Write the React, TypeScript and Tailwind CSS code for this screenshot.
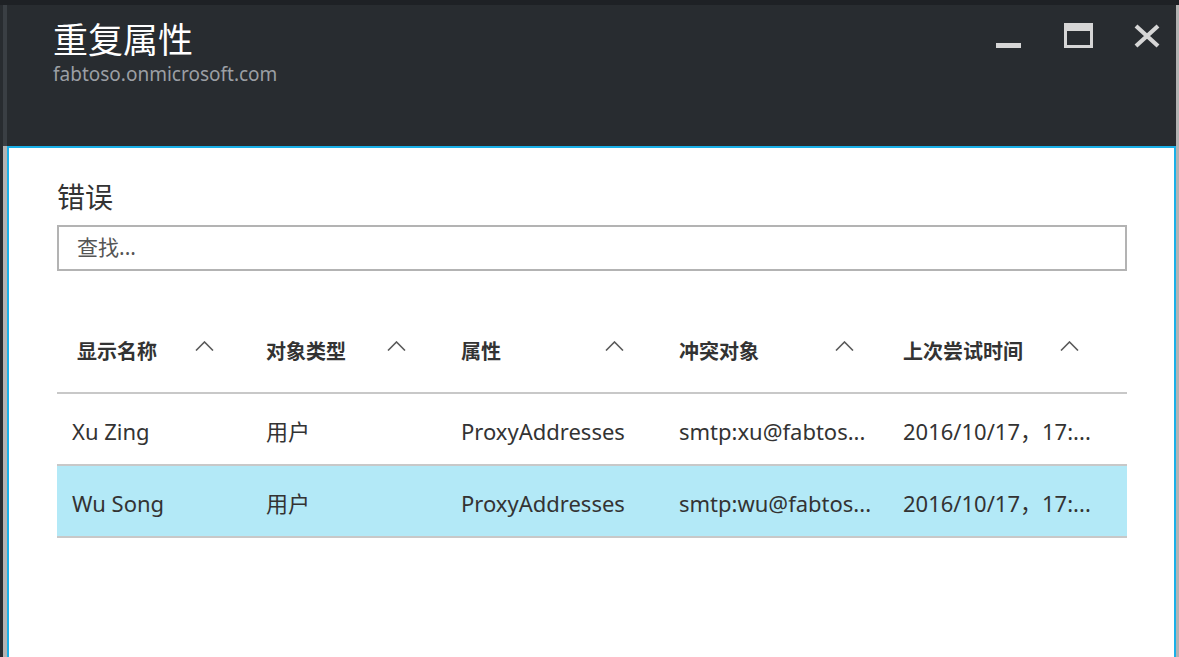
import React from "react";

/* Azure-portal style blade: "duplicate attributes" error list */

const FONT = { fontFamily: '"Noto Sans", "Noto Sans CJK SC", sans-serif' };

type Col = { title: string; width: string; gap: string };

const COLUMNS: Col[] = [
  { title: "显示名称", width: "w-[189px]", gap: "w-[118px]" },
  { title: "对象类型", width: "w-[195px]", gap: "w-[121px]" },
  { title: "属性", width: "w-[218px]", gap: "w-[144px]" },
  { title: "冲突对象", width: "w-[224px]", gap: "w-[156px]" },
  { title: "上次尝试时间", width: "w-[244px]", gap: "w-[157px]" },
];

const ROWS = [
  ["Xu Zing", "用户", "ProxyAddresses", "smtp:xu@fabtos...", "2016/10/17，17:..."],
  ["Wu Song", "用户", "ProxyAddresses", "smtp:wu@fabtos...", "2016/10/17，17:..."],
];

function Chevron() {
  return (
    <svg width="19" height="10" viewBox="0 0 19 10" className="text-[#5a5a5a]">
      <path d="M1 9.5 L9.5 1 L18 9.5" fill="none" stroke="currentColor" strokeWidth="1.6" />
    </svg>
  );
}

function WindowButtons() {
  return (
    <div className="flex items-start text-[#d6d6d6]">
      <svg width="26" height="45" viewBox="0 0 26 45" className="mr-[42px]">
        <rect x="0" y="38" width="25" height="5" fill="currentColor" />
      </svg>
      <svg width="29" height="45" viewBox="0 0 29 45" className="mr-[41px]">
        <path d="M0 18 H29 V43 H0 Z M3 26 V40 H26 V26 Z" fill="currentColor" fillRule="evenodd" />
      </svg>
      <svg width="26" height="45" viewBox="0 0 26 45">
        <path d="M2 21 L24 41 M24 21 L2 41" stroke="currentColor" strokeWidth="4.2" />
      </svg>
    </div>
  );
}

export default function App() {
  return (
    <div className="flex h-[657px] w-[1179px] flex-col overflow-hidden bg-[#282c30]" style={FONT}>
      <div className="h-[5px] bg-[#1e2125]" />
      <div className="flex flex-1">
        <div className="w-[3px]" />
        <div className="flex w-[4px] flex-col">
          <div className="h-[141px] bg-[#3a3f44]" />
          <div className="flex-1 bg-[#b3b3b3]" />
        </div>
        <div className="flex flex-1 flex-col">
          {/* header */}
          <div className="flex h-[141px] justify-between">
            <div className="pl-[46px] pt-[13px]">
              <div className="text-[35px] leading-[44px] text-white">重复属性</div>
              <div className="text-[19px] leading-[24px] text-[#9b9fa4]">fabtoso.onmicrosoft.com</div>
            </div>
            <div className="pr-[16px]">
              <WindowButtons />
            </div>
          </div>
          {/* content */}
          <div className="flex flex-1 border-t-2 border-[#1ab0e8]">
            <div className="flex-1 border-x-2 border-[#1ab0e8] bg-white pl-[48px] pr-[47px] pt-[31px]">
              <div className="text-[28px] leading-[36px] text-[#333]">错误</div>
              <div className="mt-[10px] flex h-[46px] items-center border-2 border-[#b3b3b3] pl-[18px] text-[21px] text-[#555]">
                查找...
              </div>
              {/* table */}
              <div className="mt-[57px]">
                <div className="flex h-[66px] items-start border-b-2 border-[#c8c8c8] pt-[7px]">
                  {COLUMNS.map((c) => (
                    <div key={c.title} className={`${c.width} flex items-start pl-[20px]`}>
                      <div className={`${c.gap} shrink-0 text-[20px] font-bold leading-[34px] text-[#333]`}>
                        {c.title}
                      </div>
                      <div className="pt-[6px]">
                        <Chevron />
                      </div>
                    </div>
                  ))}
                </div>
                {ROWS.map((r, ri) => (
                  <div
                    key={ri}
                    className={`flex h-[72px] items-center border-b-2 border-[#c8c8c8] pt-[4px] text-[22px] text-[#333] ${
                      ri === 1 ? "bg-[#b3e9f7]" : ""
                    }`}
                  >
                    {r.map((cell, ci) => (
                      <div
                        key={ci}
                        className={`${COLUMNS[ci].width} whitespace-nowrap ${ci === 0 ? "pl-[15px]" : "pl-[20px]"}`}
                      >
                        {cell}
                      </div>
                    ))}
                  </div>
                ))}
              </div>
            </div>
          </div>
        </div>
        <div className="w-[3px] bg-[#b3b3b3]" />
      </div>
    </div>
  );
}
